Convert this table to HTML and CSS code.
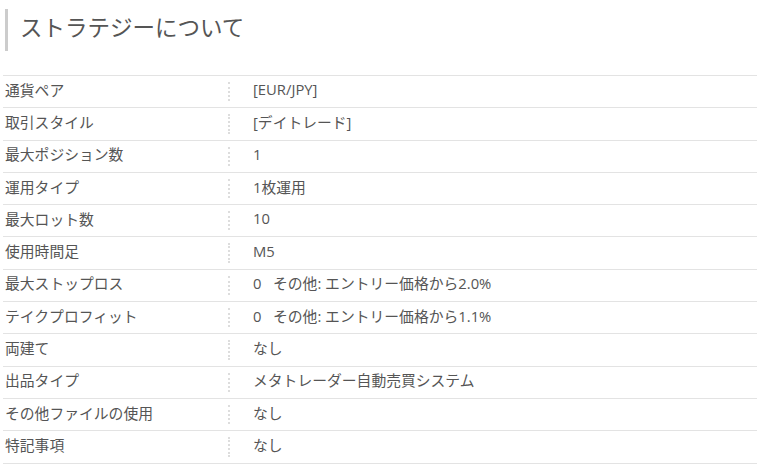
FILE: index.html
```html
<!DOCTYPE html>
<html lang="ja">
<head>
<meta charset="utf-8">
<link rel="stylesheet" href="styles.css">
</head>
<body>
<div class="page">
  <h2 class="title">ストラテジーについて</h2>
  <div class="spec">
    <div class="row"><div class="label">通貨ペア</div><div class="value">[EUR/JPY]</div></div>
    <div class="row"><div class="label">取引スタイル</div><div class="value">[デイトレード]</div></div>
    <div class="row"><div class="label">最大ポジション数</div><div class="value">1</div></div>
    <div class="row"><div class="label">運用タイプ</div><div class="value">1枚運用</div></div>
    <div class="row"><div class="label">最大ロット数</div><div class="value">10</div></div>
    <div class="row"><div class="label">使用時間足</div><div class="value">M5</div></div>
    <div class="row"><div class="label">最大ストップロス</div><div class="value">0&nbsp;&nbsp;&nbsp;その他: エントリー価格から2.0%</div></div>
    <div class="row"><div class="label">テイクプロフィット</div><div class="value">0&nbsp;&nbsp;&nbsp;その他: エントリー価格から1.1%</div></div>
    <div class="row"><div class="label">両建て</div><div class="value">なし</div></div>
    <div class="row"><div class="label">出品タイプ</div><div class="value">メタトレーダー自動売買システム</div></div>
    <div class="row"><div class="label">その他ファイルの使用</div><div class="value">なし</div></div>
    <div class="row"><div class="label">特記事項</div><div class="value">なし</div></div>
  </div>
</div>
</body>
</html>
```
FILE: styles.css
```css
html, body {
  margin: 0;
  padding: 0;
  background: #fff;
}
body {
  font-family: "Open Sans", "Noto Sans CJK JP", sans-serif;
  color: #555;
}
.page {
  padding: 9px 14px 0 3px;
}
.title {
  margin: 0 0 24px 2px;
  border-left: 3px solid #ccc;
  padding-left: 12px;
  height: 42px;
  line-height: 38px;
  font-size: 22.5px;
  font-weight: normal;
  color: #555;
}
.spec {
  border-top: 1px solid #e3e3e3;
}
.row {
  display: grid;
  grid-template-columns: 225px 1fr;
  height: 31.3px;
  border-bottom: 1px solid #e3e3e3;
  align-items: stretch;
  font-size: 14.8px;
}
.label, .value {
  display: flex;
  align-items: center;
  padding-bottom: 5px;
  box-sizing: border-box;
}
.label {
  padding-left: 2px;
}
.value {
  position: relative;
  padding-left: 25px;
}
.value::before {
  content: "";
  position: absolute;
  left: 0;
  top: 6px;
  bottom: 6px;
  border-left: 2px dotted #ddd;
}
```
